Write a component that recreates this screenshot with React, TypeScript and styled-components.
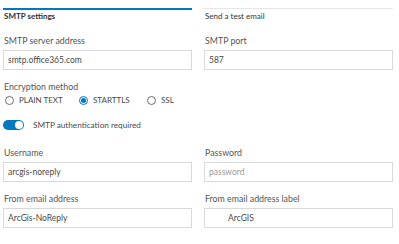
import styled, { createGlobalStyle } from 'styled-components'

const GlobalStyle = createGlobalStyle`
    html, body {
        margin: 0;
        padding: 0;
        background: #fff;
    }
    body {
        font-family: Lato, 'Noto Sans', sans-serif;
        color: #4a4a4a;
    }
`

export default function App() {
    return (
        <>
            <GlobalStyle />
            <Page>
                <Tabs>
                    <Tab active>SMTP settings</Tab>
                    <Tab>Send a test email</Tab>
                </Tabs>

                <Grid>
                    <Field>
                        <Label>SMTP server address</Label>
                        <Input>smtp.office365.com</Input>
                    </Field>
                    <Field>
                        <Label>SMTP port</Label>
                        <Input>587</Input>
                    </Field>
                </Grid>

                <Encryption>
                    <Label>Encryption method</Label>
                    <RadioRow>
                        <RadioOption>
                            <Radio />
                            PLAIN TEXT
                        </RadioOption>
                        <RadioOption>
                            <Radio checked />
                            STARTTLS
                        </RadioOption>
                        <RadioOption>
                            <Radio />
                            SSL
                        </RadioOption>
                    </RadioRow>
                </Encryption>

                <SwitchRow>
                    <Switch />
                    SMTP authentication required
                </SwitchRow>

                <Grid wide>
                    <Field>
                        <Label>Username</Label>
                        <Input>arcgis-noreply</Input>
                    </Field>
                    <Field>
                        <Label>Password</Label>
                        <Input placeholder>password</Input>
                    </Field>
                </Grid>

                <Grid>
                    <Field>
                        <Label>From email address</Label>
                        <Input>ArcGis-NoReply</Input>
                    </Field>
                    <Field>
                        <Label>From email address label</Label>
                        <Input indent>ArcGIS</Input>
                    </Field>
                </Grid>
            </Page>
        </>
    )
}

const Page = styled.div`
    width: 399px;
    height: 244px;
    padding: 8px 0 0 3px;
    box-sizing: border-box;
    overflow: hidden;
`

const Tabs = styled.div`
    display: grid;
    grid-template-columns: 189px 189px;
    column-gap: 12px;
`

const Tab = styled.div<{ active?: boolean }>`
    box-sizing: border-box;
    height: 16px;
    border-top: ${(p) => (p.active ? '2px solid #0079c1' : '1px solid #e6e6e6')};
    padding-top: ${(p) => (p.active ? '1px' : '2px')};
    font-size: 8px;
    line-height: 10px;
    font-weight: ${(p) => (p.active ? 700 : 400)};
    color: #333;
    padding-left: 1px;
`

const Grid = styled.div<{ wide?: boolean }>`
    display: grid;
    grid-template-columns: 189px 189px;
    column-gap: 12px;
    margin-top: ${(p) => (p.wide ? '17px' : '11px')};
`

const Field = styled.div`
    display: flex;
    flex-direction: column;
    gap: 3px;
`

const Label = styled.div`
    font-size: 8.8px;
    line-height: 12px;
    color: #555;
    padding-left: 1px;
`

const Input = styled.div<{ placeholder?: boolean; indent?: boolean }>`
    box-sizing: border-box;
    height: 20px;
    border: 1px solid #d9d9d9;
    padding-left: ${(p) => (p.indent ? '23px' : '4px')};
    font-size: 8.5px;
    line-height: 18px;
    color: ${(p) => (p.placeholder ? '#9a9a9a' : '#4a4a4a')};
`

const Encryption = styled.div`
    margin-top: 11px;
    display: flex;
    flex-direction: column;
    gap: 1px;
`

const RadioRow = styled.div`
    display: flex;
    align-items: center;
    height: 12px;
`

const RadioOption = styled.div`
    display: flex;
    align-items: center;
    gap: 5px;
    font-size: 8px;
    color: #4a4a4a;
    width: 74px;
    &:nth-child(2) {
        width: 68px;
    }
`

const Radio = styled.span<{ checked?: boolean }>`
    width: 9px;
    height: 9px;
    box-sizing: border-box;
    border-radius: 50%;
    border: 1px solid ${(p) => (p.checked ? '#0079c1' : '#6e6e6e')};
    display: inline-flex;
    align-items: center;
    justify-content: center;
    margin-left: 2px;
    &::after {
        content: '';
        display: ${(p) => (p.checked ? 'block' : 'none')};
        width: 5px;
        height: 5px;
        border-radius: 50%;
        background: #0079c1;
    }
`

const SwitchRow = styled.div`
    display: flex;
    align-items: center;
    gap: 9px;
    margin-top: 14px;
    font-size: 8.2px;
    color: #4a4a4a;
`

const Switch = styled.span`
    position: relative;
    width: 21px;
    height: 10px;
    border-radius: 5px;
    background: #0079c1;
    &::after {
        content: '';
        position: absolute;
        right: 1px;
        top: 1px;
        width: 8px;
        height: 8px;
        border-radius: 50%;
        background: #fff;
    }
`
